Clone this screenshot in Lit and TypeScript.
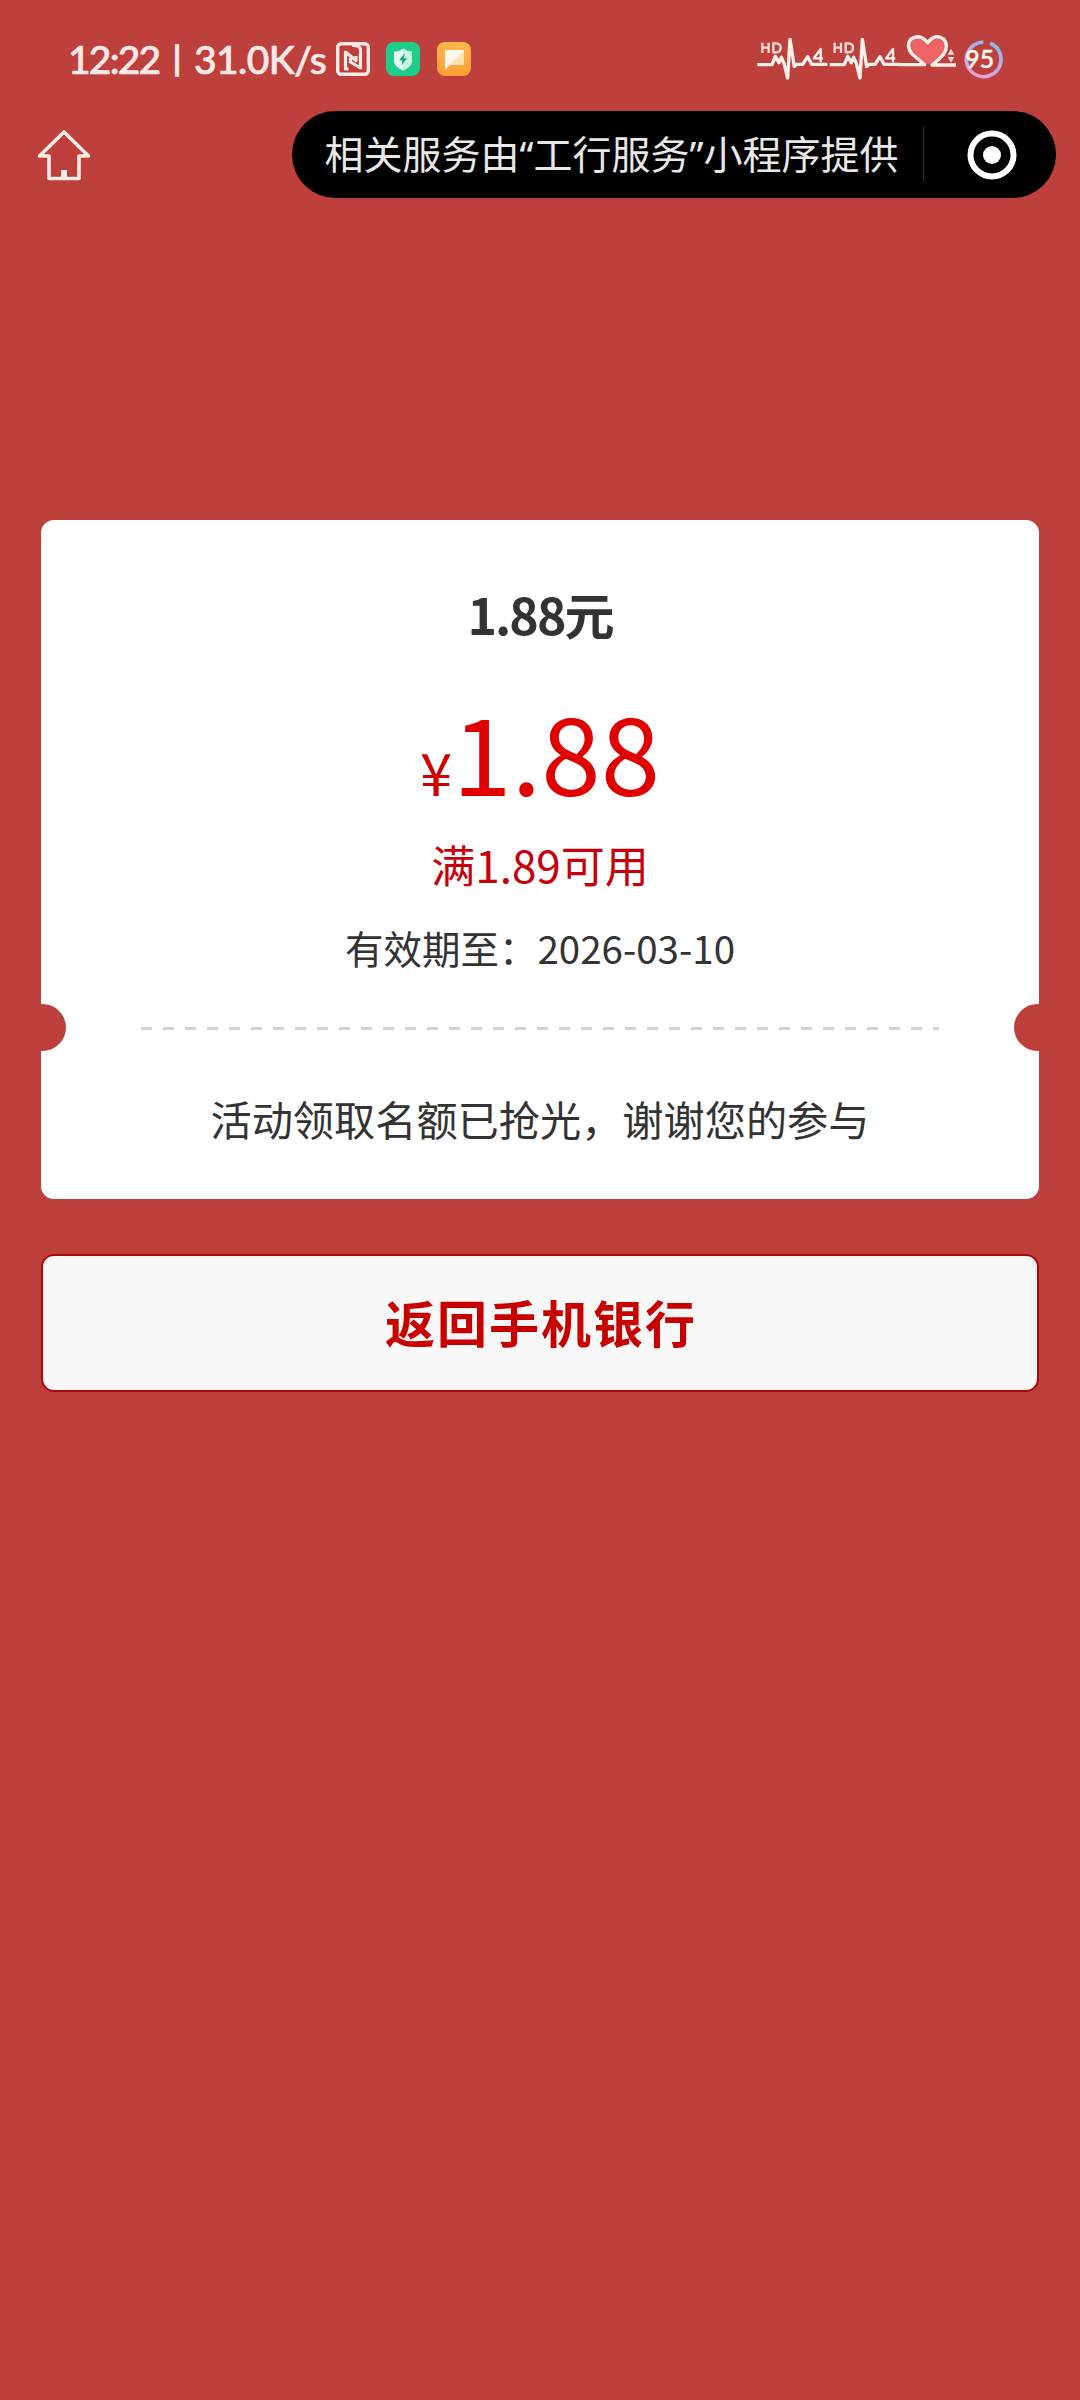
import { LitElement, html, css, svg } from "lit";
import { customElement } from "lit/decorators.js";

const signal = (x: number) => svg`
  <g transform="translate(${x} 0)">
    <path d="M52 134H96L106 109L117 128L124 112L132 130L143 174L150 58L163 140L170 133H188L203 110L215 133H262" />
    <path stroke-width="7" d="M242 127V87L221 115H249" />
    <path stroke-width="7" stroke="#ffd9d4" d="M67 68V99M67 83H86M86 68V99M100 70V97H107Q122 97 122 83Q122 70 107 70Z" />
  </g>`;

@customElement("status-bar")
export class StatusBar extends LitElement {
  static styles = css`
    :host { display: flex; height: 111px; box-sizing: border-box; padding: 0 69px 0 68px; align-items: flex-start; color: #ffe9e6; }
    .clock { display: flex; height: 36px; margin-top: 40px; font: 500 39px/38px Lato, "Noto Sans", sans-serif; white-space: pre; width: 267.5px; -webkit-text-stroke: 0.7px #ffe9e6; }
    .time { width: 105px; letter-spacing: -1.8px; }
    .bar { width: 21px; font-size: 32px; line-height: 35px; -webkit-text-stroke: 1.6px #ffe9e6; }
    .speed { letter-spacing: -0.6px; }
    .icons { display: flex; gap: 16.5px; margin-top: 42px; }
    .signals { margin: 20px 0 0 auto; }
    svg { display: block; }
  `;
  render() {
    return html`
      <div class="clock"><span class="time">12:22</span><span class="bar">|</span><span class="speed">31.0K/s</span></div>
      <div class="icons">
        <svg width="34" height="34" viewBox="0 0 34 34" fill="none" stroke="#ffe9e6">
          <rect x="1.7" y="1.7" width="30.6" height="30.6" rx="3.5" stroke-width="3.4" />
          <path stroke-width="3.2" stroke-linejoin="round" d="M12.500 27H9.500V10L20 18.500V14" />
          <path stroke-width="3.2" stroke-linejoin="round" d="M16 3.500Q24.500 3 24.500 8V26L14.500 20V16" />
        </svg>
        <svg width="34" height="34" viewBox="0 0 34 34">
          <rect width="34" height="34" rx="8" fill="#1dce8b" />
          <path d="M17 6.5C20 9 23 9.5 26 9.5V18C26 23.5 21.5 26.5 17 28.5C12.500 26.500 8 23.500 8 18V9.500C11 9.500 14 9 17 6.500Z" fill="#e9fff6" />
          <path d="M17 6.500C20 9 23 9.500 26 9.500V18C26 23.500 21.500 26.500 17 28.500Z" fill="#c4f6e1" />
          <path d="M18.800 11L13 18.500H16.500L15.500 23.500L21 16.200H17.700Z" fill="#12a873" />
        </svg>
        <svg width="34" height="34" viewBox="0 0 34 34">
          <defs><linearGradient id="amber" x1="0" y1="0" x2="0" y2="1"><stop offset="0" stop-color="#ffb84e" /><stop offset="1" stop-color="#ff9d36" /></linearGradient></defs>
          <rect width="34" height="34" rx="8" fill="url(#amber)" />
          <path d="M9 8H26Q27 8 27 9V22Q27 23 26 23H13L9 27.500Q8 28 8 26.500V9Q8 8 9 8Z" fill="#ffe0b0" />
          <path d="M9 8H26Q27 8 27 9L8 27V9Q8 8 9 8Z" fill="#fffaf0" />
        </svg>
      </div>
      <svg class="signals" width="271" height="80" viewBox="0 0 813 240" fill="none" stroke="#fff0ea" stroke-width="10" stroke-linejoin="round">
        <defs><linearGradient id="ring" x1="0" y1="0" x2="1" y2="0"><stop offset="0" stop-color="#e8a0dc" /><stop offset="1" stop-color="#86bdf2" /></linearGradient></defs>
        <path fill="#ee6466" stroke="none" d="M563 66Q544 44 522 51Q500 62 508 88Q512 96 552 131H576L612 98Q626 70 606 53Q582 44 563 66Z" />
        ${signal(0)}${signal(217)}
        <path d="M478 134H554L516 102Q496 78 512 58Q540 38 563 68Q586 38 612 58Q628 78 610 104Q594 122 576 135H648" />
        <path fill="#ffd9d4" stroke="none" d="M623 104L633 86L643 104ZM623 111H643L633 128Z" />
        <circle cx="731" cy="118" r="52" stroke="url(#ring)" stroke-width="11" stroke-dasharray="304 23" transform="rotate(-68 731 118)" />
        <text x="676" y="145" font-family="Lato, sans-serif" font-size="76" font-weight="500" fill="#fff7f2" stroke="#fff7f2" stroke-width="1.500" textLength="86" lengthAdjust="spacingAndGlyphs">95</text>
      </svg>`;
  }
}

@customElement("nav-bar")
export class NavBar extends LitElement {
  static styles = css`
    :host { display: flex; justify-content: space-between; padding: 0 24.5px 0 36px; height: 87px; }
    .home { display: block; margin-top: 16px; }
    .pill { display: flex; align-items: center; box-sizing: border-box; width: 764px; height: 87px; padding-left: 33px; border-radius: 44px; background: #000; }
    .label { width: 598px; padding-bottom: 3px; white-space: nowrap; color: #e8e8e8; font: 400 39px/56px "Noto Sans CJK SC", sans-serif; }
    .quote { font-family: "Noto Sans", sans-serif; }
    .rule { width: 1px; height: 55px; background: #333; }
    .target { margin-left: 43px; }
  `;
  render() {
    return html`
      <svg class="home" width="56" height="56" viewBox="0 0 56 56" fill="none" stroke="#ffeae4" stroke-width="3.600" stroke-linejoin="round">
        <path d="M28 5L3.500 29H13V51.500H43V29H52.500Z" /><path stroke-width="6" d="M28 43V51" />
      </svg>
      <div class="pill">
        <span class="label">相关服务由<span class="quote">“</span>工行服务<span class="quote">”</span>小程序提供</span>
        <span class="rule"></span>
        <svg class="target" width="50" height="50" viewBox="0 0 50 50"><circle cx="25" cy="25" r="21.500" fill="none" stroke="#fff" stroke-width="6" /><circle cx="25" cy="25" r="9" fill="#fff" /></svg>
      </div>`;
  }
}

@customElement("coupon-card")
export class CouponCard extends LitElement {
  static styles = css`
    :host { display: flex; flex-direction: column; align-items: center; box-sizing: border-box; height: 679px; padding-top: 55px; border-radius: 13px; background: #fff; color: #333; overflow: hidden; text-align: center; }
    .title { height: 76px; font-size: 50px; line-height: 76px; font-weight: 700; letter-spacing: -1.9px; }
    .amount { display: flex; align-items: baseline; height: 156px; margin-top: 21px; color: #e00000; font-size: 107px; line-height: 156px; }
    .yen { font-size: 58px; color: #d00000; }
    .limit { height: 64px; margin-top: 4px; line-height: 64px; font-size: 44px; color: #c7000b; }
    .expiry { height: 58px; margin-top: 22px; line-height: 58px; font-size: 38.5px; }
    .tear { display: flex; align-items: center; justify-content: space-between; align-self: stretch; height: 47px; margin: 28px -22px 0; }
    .notch { width: 47px; height: 47px; border-radius: 50%; background: #bd403d; }
    .dashes { width: 798px; height: 3px; margin-top: 2px; background: repeating-linear-gradient(90deg, #d0d0d0 0 11px, transparent 11px 22px); }
    .message { height: 60px; margin-top: 37px; line-height: 60px; font-size: 41.2px; }
  `;
  render() {
    return html`
      <div class="title">1.88元</div>
      <div class="amount"><span class="yen">¥</span><span>1.88</span></div>
      <div class="limit">满1.89可用</div>
      <div class="expiry">有效期至：2026-03-10</div>
      <div class="tear"><span class="notch"></span><span class="dashes"></span><span class="notch"></span></div>
      <div class="message">活动领取名额已抢光，谢谢您的参与</div>`;
  }
}

@customElement("app-root")
export class AppRoot extends LitElement {
  static styles = css`
    :host { display: block; width: 1080px; height: 2400px; background: #bd403d; font-family: "Noto Sans CJK SC", sans-serif; overflow: hidden; }
    .content { display: flex; flex-direction: column; gap: 55px; padding: 322px 41px 0; }
    .back { box-sizing: border-box; height: 138px; border: 2px solid #b0060e; border-radius: 13px; background: #f8f8f8; color: #c70000; font: 700 50px/130px "Noto Sans CJK SC", sans-serif; letter-spacing: 2px; padding: 0 0 6px 2px; }
  `;
  render() {
    return html`
      <status-bar></status-bar>
      <nav-bar></nav-bar>
      <main class="content">
        <coupon-card></coupon-card>
        <button class="back">返回手机银行</button>
      </main>`;
  }
}
